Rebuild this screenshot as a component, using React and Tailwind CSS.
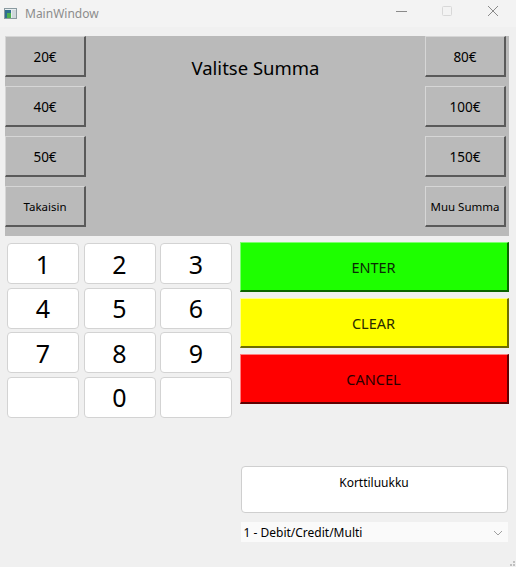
import React from "react";

const font = { fontFamily: '"Noto Sans", "Open Sans", sans-serif' };

function GrayBtn({ children, small }) {
  return (
    <div
      className={`w-[81px] h-[41px] flex items-center justify-center pt-[2px] bg-[#bababa] border-t border-l border-t-[#d6d6d6] border-l-[#d6d6d6] border-b-2 border-r-2 border-b-[#5a5a5a] border-r-[#5a5a5a] text-black ${small ? "text-[11.5px]" : "text-[13.5px]"}`}
    >
      {children}
    </div>
  );
}

function NumBtn({ children }) {
  return (
    <div className="h-[41px] w-[72px] flex items-center justify-center pt-[1px] bg-white border border-[#d3d3d3] rounded-[4px] text-[25px] text-black leading-none">
      {children}
    </div>
  );
}

export default function App() {
  return (
    <div className="w-[516px] h-[567px] bg-[#f0f0f0] flex flex-col relative overflow-hidden" style={font}>
      {/* title bar */}
      <div className="h-[27px] bg-[#f3f3f3] flex items-center shrink-0">
        <svg width="13" height="11" viewBox="0 0 13 11" className="ml-[4px]">
          <rect x="0.5" y="0.5" width="12" height="10" fill="#e8eef0" stroke="#8a9aa0" />
          <rect x="1" y="2" width="6" height="8" fill="#2f6f8f" />
          <rect x="3" y="5" width="4" height="5" fill="#4caf50" />
          <rect x="8" y="2" width="4" height="8" fill="#cfd8dc" />
        </svg>
        <span className="ml-[8px] text-[12px] text-[#8c8c8c]">MainWindow</span>
        <div className="ml-auto flex items-center h-full">
          <svg width="46" height="27" viewBox="0 0 46 27">
            <line x1="18" y1="11.5" x2="29" y2="11.5" stroke="#8a8a8a" strokeWidth="1" />
          </svg>
          <svg width="46" height="27" viewBox="0 0 46 27">
            <rect x="18.5" y="6.5" width="9" height="9" rx="1" fill="none" stroke="#d8d8d8" strokeWidth="1" />
          </svg>
          <svg width="46" height="27" viewBox="0 0 46 27">
            <path d="M18 6 L28 16 M28 6 L18 16" stroke="#8a8a8a" strokeWidth="1" />
          </svg>
        </div>
      </div>

      {/* gray amount panel */}
      <div className="mt-[9px] ml-[5px] w-[504px] h-[200px] bg-[#bababa] flex justify-between pr-[3px]">
        <div className="flex flex-col gap-[9px]">
          <GrayBtn>20€</GrayBtn>
          <GrayBtn>40€</GrayBtn>
          <GrayBtn>50€</GrayBtn>
          <GrayBtn small>Takaisin</GrayBtn>
        </div>
        <div className="pt-[23px] text-[18.5px] text-black leading-none">Valitse Summa</div>
        <div className="flex flex-col gap-[9px]">
          <GrayBtn>80€</GrayBtn>
          <GrayBtn>100€</GrayBtn>
          <GrayBtn>150€</GrayBtn>
          <GrayBtn small>Muu Summa</GrayBtn>
        </div>
      </div>

      {/* lower area */}
      <div className="flex mt-[6px]">
        <div className="ml-[7px] mt-[1px] grid grid-cols-[72px_72px_72px] auto-rows-[41px] gap-x-[4.5px] gap-y-[3.5px] h-fit">
          <NumBtn>1</NumBtn>
          <NumBtn>2</NumBtn>
          <NumBtn>3</NumBtn>
          <NumBtn>4</NumBtn>
          <NumBtn>5</NumBtn>
          <NumBtn>6</NumBtn>
          <NumBtn>7</NumBtn>
          <NumBtn>8</NumBtn>
          <NumBtn>9</NumBtn>
          <NumBtn></NumBtn>
          <NumBtn>0</NumBtn>
          <NumBtn></NumBtn>
        </div>

        <div className="ml-[7.5px] flex flex-col">
          <div className="flex flex-col gap-[6px]">
            <div className="w-[269px] h-[50px] flex items-center justify-center pt-[2px] bg-[#1eff00] border-t border-l border-t-[#7dff70] border-l-[#7dff70] border-b-2 border-r-2 border-b-[#0b6400] border-r-[#0b6400] text-[14.5px] text-[#0a2a05]">
              ENTER
            </div>
            <div className="w-[269px] h-[50px] flex items-center justify-center pt-[2px] bg-[#ffff00] border-t border-l border-t-[#ffff90] border-l-[#ffff90] border-b-2 border-r-2 border-b-[#6e6e00] border-r-[#6e6e00] text-[14.5px] text-[#2a2a00]">
              CLEAR
            </div>
            <div className="w-[269px] h-[50px] flex items-center justify-center pt-[2px] bg-[#ff0000] border-t border-l border-t-[#ff8080] border-l-[#ff8080] border-b-2 border-r-2 border-b-[#600000] border-r-[#600000] text-[14.5px] text-[#2a0000]">
              CANCEL
            </div>
          </div>

          <div className="mt-[62px] ml-[1px] w-[267px] h-[47px] bg-white border border-[#cfcfcf] rounded-[4px] flex justify-center pt-[10px] text-[12px] text-black leading-none">
            Korttiluukku
          </div>

          <div className="mt-[9px] ml-[1px] w-[267px] h-[20px] bg-[#fafafa] flex items-center justify-between pl-[3px] pr-[5px] pt-[1px] text-[12px] text-black">
            <span>1 - Debit/Credit/Multi</span>
            <svg width="10" height="6" viewBox="0 0 10 6">
              <path d="M1 1 L5 5 L9 1" fill="none" stroke="#a0a0a0" strokeWidth="1" />
            </svg>
          </div>
        </div>
      </div>

      {/* size grip */}
      <div className="absolute right-[1px] bottom-[1px] grid grid-cols-3 gap-[1px]">
        <span className="w-[2px] h-[2px]"></span>
        <span className="w-[2px] h-[2px]"></span>
        <span className="w-[2px] h-[2px] bg-[#c0c0c0]"></span>
        <span className="w-[2px] h-[2px]"></span>
        <span className="w-[2px] h-[2px] bg-[#c0c0c0]"></span>
        <span className="w-[2px] h-[2px] bg-[#c0c0c0]"></span>
      </div>
    </div>
  );
}
